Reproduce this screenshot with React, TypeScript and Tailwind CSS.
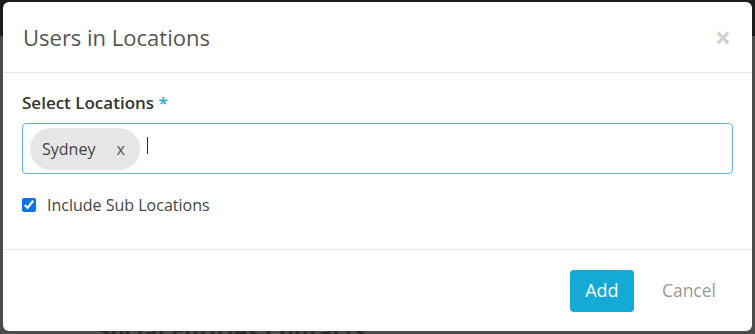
import { useState } from "react"

export default function App() {
  const [includeSub, setIncludeSub] = useState(true)

  return (
    <div
      className="relative w-[755px] h-[334px] overflow-hidden bg-[#4b4b4b]"
      style={{ fontFamily: '"Open Sans", "Liberation Sans", sans-serif' }}
    >
      {/* backdrop behind the modal */}
      <div className="absolute left-0 top-0 w-full h-[36px] bg-[#1c1c1c]" />
      <div className="absolute left-[98px] top-[314px] text-[22px] font-bold text-[#2a2a2a] tracking-wide">
        Social Entities Contacts
      </div>

      {/* Modal */}
      <div className="absolute left-[3px] top-[2px] w-[749px] h-[329px] bg-white rounded-[6px] flex flex-col">
        <div className="h-[71px] flex items-center justify-between pl-[20px] pr-[21px] border-b border-[#e5e5e5]">
          <h4 className="text-[22px] text-[#555] leading-none">Users in Locations</h4>
          <button className="text-[28px] font-bold text-[#cfcfcf] leading-none">×</button>
        </div>

        <div className="flex-1 px-[19px] pt-[18px] border-b border-[#e5e5e5]">
          <label className="block text-[17px] font-semibold text-[#333] leading-[24px]">
            Select Locations <span className="text-[#1aa9d4]">*</span>
          </label>
          <div className="mt-[8px] h-[51px] border border-[#66afe9] rounded-[4px] flex items-center pl-[7px] gap-[7px]">
            <span className="h-[42px] flex items-center rounded-full bg-[#e6e6e6] pl-[12px] pr-[15px] text-[16px] text-[#444]">
              Sydney
              <span className="ml-[21px] text-[16px] text-[#555]">x</span>
            </span>
            <span className="w-px h-[17px] bg-[#333] -mt-[6px]" />
          </div>
          <label className="mt-[21px] flex items-center gap-[11px] text-[16px] text-[#444] leading-[20px]">
            <input
              type="checkbox"
              checked={includeSub}
              onChange={(e) => setIncludeSub(e.target.checked)}
              className="w-[14px] h-[14px] accent-[#0b75e8]"
            />
            Include Sub Locations
          </label>
        </div>

        <div className="h-[81px] flex items-center justify-end pr-[36px] gap-[28px]">
          <button className="h-[42px] w-[64px] rounded-[4px] bg-[#15a9d6] text-white text-[18px]">Add</button>
          <button className="text-[17.5px] text-[#999]">Cancel</button>
        </div>
      </div>
    </div>
  )
}
